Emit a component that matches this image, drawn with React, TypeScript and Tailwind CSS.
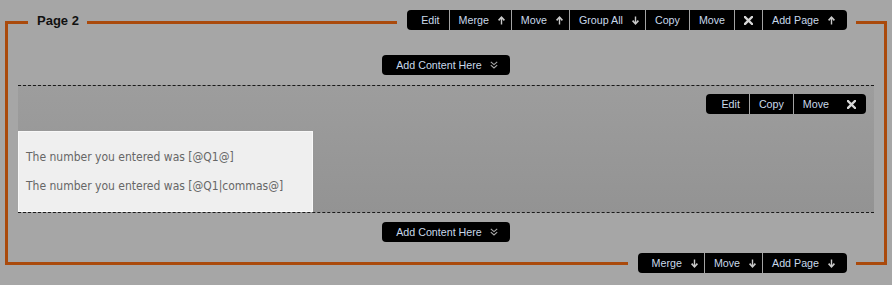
import React from "react";

const font = { fontFamily: '"Liberation Sans", Arial, sans-serif' };

const Arrow = ({ dir }: { dir: "up" | "down" }) => (
    <svg width="7" height="9" viewBox="0 0 7 9" className={`ml-[9px] ${dir === "down" ? "rotate-180" : ""}`}>
        <path d="M3.5 8.5V1.5" stroke="#c9c9c9" strokeWidth="1.4" />
        <path d="M0.6 4.4L3.5 1.2L6.4 4.4" stroke="#c9c9c9" strokeWidth="1.6" fill="none" />
    </svg>
);

const Close = () => (
    <svg width="9" height="9" viewBox="0 0 9 9">
        <path d="M1 1L8 8M8 1L1 8" stroke="#d6d6d6" strokeWidth="2.4" strokeLinecap="square" />
    </svg>
);

const Chevrons = () => (
    <svg width="8" height="8" viewBox="0 0 8 8" className="ml-[8px]">
        <path d="M0.8 0.8L4 3.6L7.2 0.8M0.8 4.2L4 7L7.2 4.2" stroke="#a9a9a9" strokeWidth="1.1" fill="none" />
    </svg>
);

type CellProps = { label?: string; arrow?: "up" | "down"; sep?: boolean; close?: boolean; className?: string };

const Cell = ({ label, arrow, sep = true, close, className = "" }: CellProps) => (
    <div
        className={`flex h-full items-center ${sep ? "border-l border-[#a3a3a3]" : ""} ${
            arrow ? "pl-[9px] pr-[6px]" : "px-[9px]"
        } ${className}`}
    >
        {close ? <Close /> : <span className="text-[10.7px] leading-none text-[#c8d8ea]">{label}</span>}
        {arrow && <Arrow dir={arrow} />}
    </div>
);

const Toolbar = ({ children, className = "" }: { children: React.ReactNode; className?: string }) => (
    <div className={`flex h-[20px] items-center rounded-[4px] bg-black pl-[5px] pr-[5px] ${className}`} style={font}>
        {children}
    </div>
);

const AddContent = () => (
    <button
        className="flex h-[20px] items-center rounded-[4px] bg-black pl-[14px] pr-[12px] text-[10.7px] leading-none text-[#c8d8ea]"
        style={font}
    >
        Add Content Here
        <Chevrons />
    </button>
);

export default function App() {
    return (
        <div className="h-[285px] w-[892px] overflow-hidden bg-[#a6a6a6] pl-[5px] pt-[21px]">
            <div className="relative h-[244px] w-[882px] border-[3px] border-[#aa4a0c]">
                {/* legend */}
                <div
                    className="absolute left-[20px] top-[-11px] bg-[#a6a6a6] pl-[9px] pr-[8px] text-[13px] font-bold leading-[16px] text-[#111]"
                    style={font}
                >
                    Page 2
                </div>

                {/* page toolbar (top) */}
                <div className="absolute right-[28px] top-[-14px] bg-[#a6a6a6] pl-[10px] pr-[9px]">
                    <Toolbar>
                        <Cell label="Edit" sep={false} />
                        <Cell label="Merge" arrow="up" />
                        <Cell label="Move" arrow="up" />
                        <Cell label="Group All" arrow="down" />
                        <Cell label="Copy" />
                        <Cell label="Move" />
                        <Cell close className="border-l border-[#a3a3a3]" sep={false} />
                        <Cell label="Add Page" arrow="up" className="!pr-[7px]" />
                    </Toolbar>
                </div>

                {/* page toolbar (bottom) */}
                <div className="absolute bottom-[-11px] right-[28px] bg-[#a6a6a6] pl-[10px] pr-[9px]">
                    <Toolbar>
                        <Cell label="Merge" arrow="down" sep={false} />
                        <Cell label="Move" arrow="down" />
                        <Cell label="Add Page" arrow="down" className="!pr-[7px]" />
                    </Toolbar>
                </div>

                <div className="flex flex-col items-center">
                    <div className="mt-[31px]">
                        <AddContent />
                    </div>

                    {/* content group */}
                    <div className="mx-[10px] mt-[10px] self-stretch border-y border-dashed border-[#1a1a1a] bg-gradient-to-b from-[#9d9d9d] to-[#939393]">
                        <div className="mt-[8px] flex justify-end pr-[8px]">
                            <Toolbar>
                                <Cell label="Edit" sep={false} className="!pl-[10px]" />
                                <Cell label="Copy" />
                                <Cell label="Move" className="!pr-[18px]" />
                                <Cell close sep={false} className="!pl-0 !pr-[5px]" />
                            </Toolbar>
                        </div>
                        <div
                            className="mt-[17px] flex h-[81px] w-[295px] flex-col gap-[15px] border border-[#f8f8f8] bg-[#efefef] pl-[7px] pt-[18px] text-[12px] leading-[14px] text-[#666] font-stretch-condensed"
                            style={{ fontFamily: '"DejaVu Sans Condensed", "DejaVu Sans", Tahoma, sans-serif' }}
                        >
                            <p>The number you entered was [@Q1@]</p>
                            <p>The number you entered was [@Q1|commas@]</p>
                        </div>
                    </div>

                    <div className="mt-[9px]">
                        <AddContent />
                    </div>
                </div>
            </div>
        </div>
    );
}
